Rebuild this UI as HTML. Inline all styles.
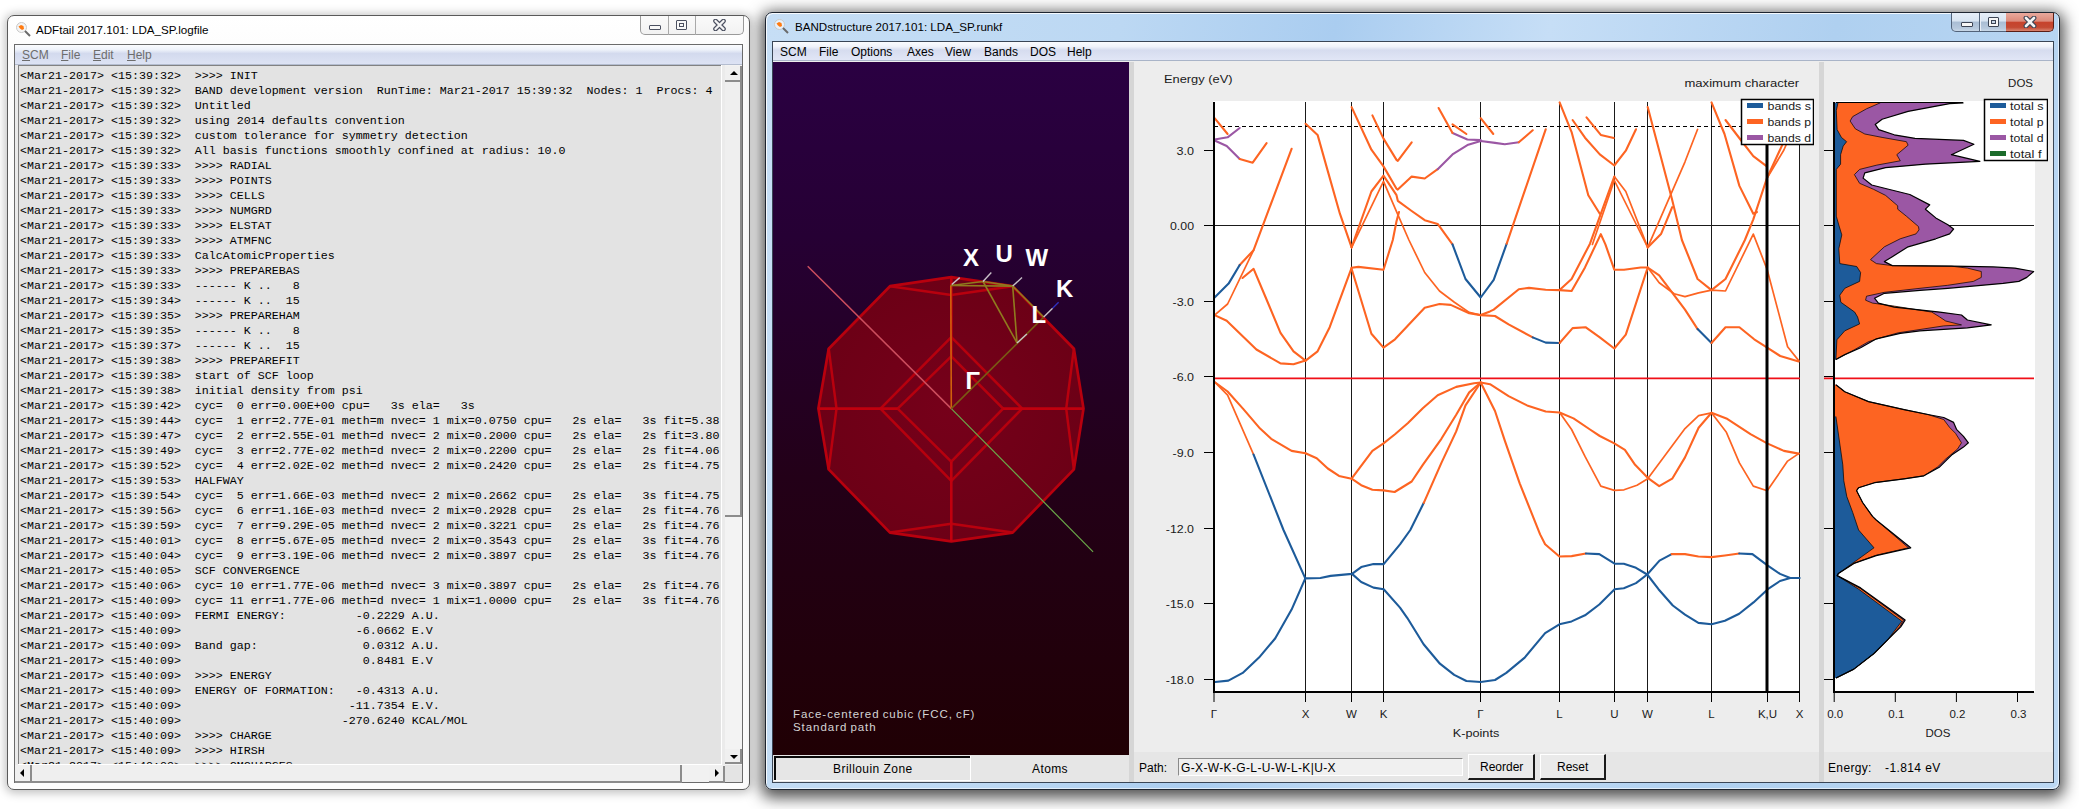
<!DOCTYPE html>
<html><head><meta charset="utf-8">
<style>
html,body{margin:0;padding:0;}
body{width:2079px;height:809px;overflow:hidden;position:relative;background:#ffffff;font-family:"Liberation Sans",sans-serif;}
.abs{position:absolute;}
pre{margin:0;font-family:"Liberation Mono",monospace;}
#win1{left:7px;top:15px;width:741px;height:773px;border:1px solid #5a5a5a;border-radius:7px;
 background:linear-gradient(#ffffff,#fcfcfc 40px,#fdfdfd);box-shadow:0 1px 10px 2px rgba(0,0,0,0.25);}
#win2{left:765px;top:12px;width:1293px;height:776px;border:1px solid #1e2530;border-radius:7px;
 background:linear-gradient(100deg,#c6def5 0%,#bcd8f3 25%,#aacdf0 40%,#c6def6 55%,#afd0f0 75%,#bcd8f3 100%);box-shadow:0 4px 15px 4px rgba(0,0,0,0.68), inset 1px 1px 0 rgba(255,255,255,0.85), inset -1px -1px 0 rgba(255,255,255,0.6);}
.title{font-size:12px;color:#000;white-space:nowrap;}
.menu{font-size:12px;white-space:nowrap;}
#logtext{left:19px;top:66px;width:702px;height:698px;overflow:hidden;background:#e3e3e3;}
#logtext pre{font-size:11.667px;line-height:15px;color:#000;padding:3px 0 0 1px;}
</style></head><body>

<!-- left window -->
<div class="abs" id="win1"></div>
<div class="abs title" style="left:36px;top:23px;font-size:11.6px;">ADFtail 2017.101: LDA_SP.logfile</div>
<svg class="abs" style="left:15px;top:21px;" width="18" height="18" viewBox="0 0 18 18">
 <circle cx="6.5" cy="6.5" r="5" fill="#f4f4f4" stroke="#c9c9c9" stroke-width="1"/>
 <path d="M3.5 5.5 L6 4 L8.5 5 L9 8 L7 9 L5 7.5 Z" fill="#ff7a10"/>
 <line x1="10" y1="10" x2="15" y2="15" stroke="#6a6a6a" stroke-width="2"/>
</svg>
<!-- title buttons left -->
<div class="abs" style="left:640px;top:16px;width:102px;height:18px;border:1px solid #9a9a9a;border-top:none;border-radius:0 0 5px 5px;background:linear-gradient(#fafafa,#f2f2f2);"></div>
<div class="abs" style="left:668px;top:16px;width:1px;height:19px;background:#a9a9a9;"></div>
<div class="abs" style="left:695px;top:16px;width:1px;height:19px;background:#a9a9a9;"></div>
<div class="abs" style="left:649px;top:25px;width:10px;height:3px;border:1px solid #4b5060;border-radius:1px;background:#f8f8f8;"></div>
<div class="abs" style="left:676px;top:20px;width:9px;height:8px;border:1px solid #4b5060;border-radius:1px;background:#f8f8f8;"></div>
<div class="abs" style="left:679px;top:23px;width:3px;height:2px;border:1px solid #4b5060;"></div>
<svg class="abs" style="left:713px;top:19px;" width="13" height="12" viewBox="0 0 13 12"><path d="M2.5 2 L10.5 10 M10.5 2 L2.5 10" stroke="#4b5060" stroke-width="4.6" stroke-linecap="round"/><path d="M2.5 2 L10.5 10 M10.5 2 L2.5 10" stroke="#f4f4f4" stroke-width="2.4" stroke-linecap="round"/></svg>
<!-- client area left -->
<div class="abs" style="left:14px;top:44px;width:727px;height:737px;border:1px solid #6b6b6b;background:#ebebeb;"></div>
<div class="abs" style="left:15px;top:45px;width:727px;height:19px;background:linear-gradient(#fbfcfe 0%,#eef2fa 25%,#d3daee 45%,#dde3f4 100%);border-bottom:1px solid #b4bdd0;"></div>
<div class="abs menu" style="left:22px;top:48px;color:#6d6d6d;"><u>S</u>CM</div>
<div class="abs menu" style="left:61px;top:48px;color:#6d6d6d;"><u>F</u>ile</div>
<div class="abs menu" style="left:93px;top:48px;color:#6d6d6d;"><u>E</u>dit</div>
<div class="abs menu" style="left:127px;top:48px;color:#6d6d6d;"><u>H</u>elp</div>
<div class="abs" style="left:18px;top:65px;width:1px;height:699px;background:#828282;"></div><div class="abs" style="left:18px;top:65px;width:703px;height:1px;background:#828282;"></div>
<div class="abs" style="left:721px;top:65px;width:1px;height:700px;background:#ffffff;"></div>
<div class="abs" style="left:18px;top:764px;width:704px;height:1px;background:#ffffff;"></div>
<!-- vscroll -->
<div class="abs" style="left:725px;top:65px;width:17px;height:700px;background:#f3f3f3;"></div>
<div class="abs" style="left:725px;top:66px;width:15px;height:14px;background:#f0f0f0;border-right:2px solid #8c8c8c;border-bottom:2px solid #8c8c8c;"></div>
<div class="abs" style="left:730px;top:71px;width:0;height:0;border-left:4px solid transparent;border-right:4px solid transparent;border-bottom:4px solid #000;"></div>
<div class="abs" style="left:725px;top:82px;width:15px;height:433px;background:#efefef;border-right:2px solid #8c8c8c;border-bottom:2px solid #8c8c8c;"></div>
<div class="abs" style="left:725px;top:749px;width:15px;height:13px;background:#f0f0f0;border-right:2px solid #8c8c8c;border-bottom:2px solid #8c8c8c;"></div>
<div class="abs" style="left:730px;top:755px;width:0;height:0;border-left:4px solid transparent;border-right:4px solid transparent;border-top:4px solid #000;"></div>
<!-- hscroll -->
<div class="abs" style="left:15px;top:765px;width:710px;height:17px;background:#f1f1f1;"></div>
<div class="abs" style="left:15px;top:765px;width:15px;height:16px;background:#f0f0f0;border-right:2px solid #8c8c8c;border-bottom:2px solid #8c8c8c;"></div>
<div class="abs" style="left:20px;top:769px;width:0;height:0;border-top:4px solid transparent;border-bottom:4px solid transparent;border-right:4px solid #000;"></div>
<div class="abs" style="left:32px;top:765px;width:648px;height:16px;background:#efefef;border-right:2px solid #8c8c8c;border-bottom:2px solid #8c8c8c;"></div>
<div class="abs" style="left:709px;top:766px;width:14px;height:15px;background:#f0f0f0;border-right:2px solid #8c8c8c;border-bottom:2px solid #8c8c8c;"></div>
<div class="abs" style="left:715px;top:769px;width:0;height:0;border-top:4px solid transparent;border-bottom:4px solid transparent;border-left:4px solid #000;"></div>
<div class="abs" style="left:725px;top:765px;width:17px;height:17px;background:#e4e4e4;"></div>

<!-- right window -->
<div class="abs" id="win2"></div>
<div class="abs title" style="left:795px;top:20px;font-size:11.6px;">BANDstructure 2017.101: LDA_SP.runkf</div>
<svg class="abs" style="left:773px;top:18px;" width="18" height="18" viewBox="0 0 18 18">
 <circle cx="6.5" cy="6.5" r="5" fill="#e6f0fa" stroke="#c9c9c9" stroke-width="1"/>
 <path d="M3.5 5.5 L6 4 L8.5 5 L9 8 L7 9 L5 7.5 Z" fill="#ff7a10"/>
 <line x1="10" y1="10" x2="15" y2="15" stroke="#6a6a6a" stroke-width="2"/>
</svg>
<!-- title buttons right -->
<div class="abs" style="left:1951px;top:13px;width:55px;height:18px;border:1px solid #52637a;border-top:none;border-radius:0 0 0 5px;background:linear-gradient(#e6eef8 0%,#d8e4f1 45%,#a9bdd4 50%,#b7c9dd 85%,#c9d8e8 100%);"></div>
<div class="abs" style="left:1979px;top:13px;width:1px;height:18px;background:#52637a;"></div>
<div class="abs" style="left:1980px;top:13px;width:1px;height:18px;background:#e8eef6;"></div>
<div class="abs" style="left:2006px;top:13px;width:47px;height:18px;border:1px solid #5a1d15;border-top:none;border-left:none;border-radius:0 0 5px 0;background:linear-gradient(#e9a99d 0%,#dc8b7b 45%,#c7432c 52%,#c44a33 80%,#d98570 100%);"></div>
<div class="abs" style="left:1961px;top:22px;width:10px;height:3px;border:1px solid #3c4454;border-radius:1px;background:#f6f6f6;"></div>
<div class="abs" style="left:1988px;top:17px;width:9px;height:8px;border:1px solid #3c4454;border-radius:1px;background:#f6f6f6;"></div>
<div class="abs" style="left:1991px;top:20px;width:3px;height:2px;border:1px solid #3c4454;background:#c8d6e6;"></div>
<svg class="abs" style="left:2023px;top:16px;" width="14" height="12" viewBox="0 0 14 12"><path d="M3 2 L11 10 M11 2 L3 10" stroke="#3c4454" stroke-width="4.8" stroke-linecap="round"/><path d="M3 2 L11 10 M11 2 L3 10" stroke="#f4f4f4" stroke-width="2.6" stroke-linecap="round"/></svg>

<div class="abs" style="left:772px;top:41px;width:1280px;height:740px;border:1px solid #3a4656;background:#ededed;"></div>
<div class="abs" style="left:773px;top:42px;width:1280px;height:18px;background:linear-gradient(#fbfcfe 0%,#f0f3fa 25%,#d6dcef 45%,#e1e6f6 100%);border-bottom:1px solid #a9b4c8;"></div>
<div class="abs menu" style="left:780px;top:45px;">SCM</div>
<div class="abs menu" style="left:819px;top:45px;">File</div>
<div class="abs menu" style="left:851px;top:45px;">Options</div>
<div class="abs menu" style="left:907px;top:45px;">Axes</div>
<div class="abs menu" style="left:945px;top:45px;">View</div>
<div class="abs menu" style="left:984px;top:45px;">Bands</div>
<div class="abs menu" style="left:1030px;top:45px;">DOS</div>
<div class="abs menu" style="left:1067px;top:45px;">Help</div>
<div class="abs" style="left:773px;top:62px;width:356px;height:693px;background:linear-gradient(#2a0042,#260034 25%,#230018 60%,#200004);"></div>
<div class="abs" style="left:1129px;top:62px;width:5px;height:720px;background:#d6d6d6;"></div>
<div class="abs" style="left:1819px;top:62px;width:5px;height:720px;background:#d6d6d6;"></div>
<div class="abs" style="left:1134px;top:752px;width:685px;height:30px;background:#e6e6e6;"></div>
<div class="abs" style="left:1824px;top:752px;width:229px;height:30px;background:#e6e6e6;"></div>
<div class="abs" style="left:773px;top:755px;width:356px;height:27px;background:#e6e6e6;"></div>
<!-- tabs -->
<div class="abs" style="left:774px;top:756px;width:195px;height:23px;background:#e6e6e6;border-left:2px solid #0a0a0a;border-top:2px solid #0a0a0a;"></div>
<div class="abs" style="left:774px;top:756px;width:197px;height:25px;box-shadow:inset -1px -1px 0 #ffffff;"></div>
<div class="abs menu" style="left:833px;top:762px;font-size:12px;letter-spacing:0.45px;">Brillouin Zone</div>
<div class="abs menu" style="left:1032px;top:762px;font-size:12px;letter-spacing:0.4px;">Atoms</div>
<div class="abs" style="left:793px;top:708px;color:#d4d4d4;font-size:11.5px;line-height:13px;letter-spacing:0.95px;word-spacing:-1px;">Face-centered cubic (FCC, cF)<br>Standard path</div>
<!-- bottom path controls -->
<div class="abs menu" style="left:1139px;top:761px;">Path:</div>
<div class="abs" style="left:1178px;top:758px;width:283px;height:16px;background:#f0f0f0;border:1px solid #ffffff;border-left-color:#8a8a8a;border-top-color:#8a8a8a;"></div>
<div class="abs menu" style="left:1181px;top:761px;letter-spacing:0.36px;">G-X-W-K-G-L-U-W-L-K|U-X</div>
<div class="abs" style="left:1468px;top:754px;width:64px;height:23px;background:#eaeaea;border:1px solid #ffffff;border-right:2px solid #1a1a1a;border-bottom:2px solid #1a1a1a;"></div>
<div class="abs menu" style="left:1480px;top:760px;">Reorder</div>
<div class="abs" style="left:1540px;top:754px;width:63px;height:23px;background:#eaeaea;border:1px solid #ffffff;border-right:2px solid #1a1a1a;border-bottom:2px solid #1a1a1a;"></div>
<div class="abs menu" style="left:1557px;top:760px;">Reset</div>
<div class="abs menu" style="left:1828px;top:761px;letter-spacing:0.35px;">Energy:</div>
<div class="abs menu" style="left:1885px;top:761px;letter-spacing:0.4px;">-1.814 eV</div>

<div class="abs" id="logtext"><pre>&lt;Mar21-2017&gt; &lt;15:39:32&gt;  &gt;&gt;&gt;&gt; INIT
&lt;Mar21-2017&gt; &lt;15:39:32&gt;  BAND development version  RunTime: Mar21-2017 15:39:32  Nodes: 1  Procs: 4
&lt;Mar21-2017&gt; &lt;15:39:32&gt;  Untitled
&lt;Mar21-2017&gt; &lt;15:39:32&gt;  using 2014 defaults convention
&lt;Mar21-2017&gt; &lt;15:39:32&gt;  custom tolerance for symmetry detection
&lt;Mar21-2017&gt; &lt;15:39:32&gt;  All basis functions smoothly confined at radius: 10.0
&lt;Mar21-2017&gt; &lt;15:39:33&gt;  &gt;&gt;&gt;&gt; RADIAL
&lt;Mar21-2017&gt; &lt;15:39:33&gt;  &gt;&gt;&gt;&gt; POINTS
&lt;Mar21-2017&gt; &lt;15:39:33&gt;  &gt;&gt;&gt;&gt; CELLS
&lt;Mar21-2017&gt; &lt;15:39:33&gt;  &gt;&gt;&gt;&gt; NUMGRD
&lt;Mar21-2017&gt; &lt;15:39:33&gt;  &gt;&gt;&gt;&gt; ELSTAT
&lt;Mar21-2017&gt; &lt;15:39:33&gt;  &gt;&gt;&gt;&gt; ATMFNC
&lt;Mar21-2017&gt; &lt;15:39:33&gt;  CalcAtomicProperties
&lt;Mar21-2017&gt; &lt;15:39:33&gt;  &gt;&gt;&gt;&gt; PREPAREBAS
&lt;Mar21-2017&gt; &lt;15:39:33&gt;  ------ K ..   8
&lt;Mar21-2017&gt; &lt;15:39:34&gt;  ------ K ..  15
&lt;Mar21-2017&gt; &lt;15:39:35&gt;  &gt;&gt;&gt;&gt; PREPAREHAM
&lt;Mar21-2017&gt; &lt;15:39:35&gt;  ------ K ..   8
&lt;Mar21-2017&gt; &lt;15:39:37&gt;  ------ K ..  15
&lt;Mar21-2017&gt; &lt;15:39:38&gt;  &gt;&gt;&gt;&gt; PREPAREFIT
&lt;Mar21-2017&gt; &lt;15:39:38&gt;  start of SCF loop
&lt;Mar21-2017&gt; &lt;15:39:38&gt;  initial density from psi
&lt;Mar21-2017&gt; &lt;15:39:42&gt;  cyc=  0 err=0.00E+00 cpu=   3s ela=   3s
&lt;Mar21-2017&gt; &lt;15:39:44&gt;  cyc=  1 err=2.77E-01 meth=m nvec= 1 mix=0.0750 cpu=   2s ela=   3s fit=5.38
&lt;Mar21-2017&gt; &lt;15:39:47&gt;  cyc=  2 err=2.55E-01 meth=d nvec= 2 mix=0.2000 cpu=   2s ela=   2s fit=3.80
&lt;Mar21-2017&gt; &lt;15:39:49&gt;  cyc=  3 err=2.77E-02 meth=d nvec= 2 mix=0.2200 cpu=   2s ela=   2s fit=4.06
&lt;Mar21-2017&gt; &lt;15:39:52&gt;  cyc=  4 err=2.02E-02 meth=d nvec= 2 mix=0.2420 cpu=   2s ela=   2s fit=4.75
&lt;Mar21-2017&gt; &lt;15:39:53&gt;  HALFWAY
&lt;Mar21-2017&gt; &lt;15:39:54&gt;  cyc=  5 err=1.66E-03 meth=d nvec= 2 mix=0.2662 cpu=   2s ela=   3s fit=4.75
&lt;Mar21-2017&gt; &lt;15:39:56&gt;  cyc=  6 err=1.16E-03 meth=d nvec= 2 mix=0.2928 cpu=   2s ela=   2s fit=4.76
&lt;Mar21-2017&gt; &lt;15:39:59&gt;  cyc=  7 err=9.29E-05 meth=d nvec= 2 mix=0.3221 cpu=   2s ela=   2s fit=4.76
&lt;Mar21-2017&gt; &lt;15:40:01&gt;  cyc=  8 err=5.67E-05 meth=d nvec= 2 mix=0.3543 cpu=   2s ela=   3s fit=4.76
&lt;Mar21-2017&gt; &lt;15:40:04&gt;  cyc=  9 err=3.19E-06 meth=d nvec= 2 mix=0.3897 cpu=   2s ela=   3s fit=4.76
&lt;Mar21-2017&gt; &lt;15:40:05&gt;  SCF CONVERGENCE
&lt;Mar21-2017&gt; &lt;15:40:06&gt;  cyc= 10 err=1.77E-06 meth=d nvec= 3 mix=0.3897 cpu=   2s ela=   2s fit=4.76
&lt;Mar21-2017&gt; &lt;15:40:09&gt;  cyc= 11 err=1.77E-06 meth=d nvec= 1 mix=1.0000 cpu=   2s ela=   3s fit=4.76
&lt;Mar21-2017&gt; &lt;15:40:09&gt;  FERMI ENERGY:          -0.2229 A.U.
&lt;Mar21-2017&gt; &lt;15:40:09&gt;                         -6.0662 E.V
&lt;Mar21-2017&gt; &lt;15:40:09&gt;  Band gap:               0.0312 A.U.
&lt;Mar21-2017&gt; &lt;15:40:09&gt;                          0.8481 E.V
&lt;Mar21-2017&gt; &lt;15:40:09&gt;  &gt;&gt;&gt;&gt; ENERGY
&lt;Mar21-2017&gt; &lt;15:40:09&gt;  ENERGY OF FORMATION:   -0.4313 A.U.
&lt;Mar21-2017&gt; &lt;15:40:09&gt;                        -11.7354 E.V.
&lt;Mar21-2017&gt; &lt;15:40:09&gt;                       -270.6240 KCAL/MOL
&lt;Mar21-2017&gt; &lt;15:40:09&gt;  &gt;&gt;&gt;&gt; CHARGE
&lt;Mar21-2017&gt; &lt;15:40:09&gt;  &gt;&gt;&gt;&gt; HIRSH
&lt;Mar21-2017&gt; &lt;15:40:09&gt;  &gt;&gt;&gt;&gt; CMCHARGES</pre></div>
<svg class="abs" style="left:0;top:0;" width="2079" height="809" viewBox="0 0 2079 809">
<rect x="1213" y="101" width="587" height="591" fill="#ffffff"/>
<line x1="1305.5" y1="102" x2="1305.5" y2="691" stroke="#1a1a1a" stroke-width="1"/>
<line x1="1351.5" y1="102" x2="1351.5" y2="691" stroke="#1a1a1a" stroke-width="1"/>
<line x1="1383.5" y1="102" x2="1383.5" y2="691" stroke="#1a1a1a" stroke-width="1"/>
<line x1="1480.5" y1="102" x2="1480.5" y2="691" stroke="#1a1a1a" stroke-width="1"/>
<line x1="1559.5" y1="102" x2="1559.5" y2="691" stroke="#1a1a1a" stroke-width="1"/>
<line x1="1614.5" y1="102" x2="1614.5" y2="691" stroke="#1a1a1a" stroke-width="1"/>
<line x1="1647.5" y1="102" x2="1647.5" y2="691" stroke="#1a1a1a" stroke-width="1"/>
<line x1="1711.5" y1="102" x2="1711.5" y2="691" stroke="#1a1a1a" stroke-width="1"/>
<line x1="1799.5" y1="102" x2="1799.5" y2="691" stroke="#1a1a1a" stroke-width="1"/>
<line x1="1214" y1="225.5" x2="1800" y2="225.5" stroke="#1a1a1a" stroke-width="1"/>
<line x1="1214" y1="126.5" x2="1800" y2="126.5" stroke="#000" stroke-width="1" stroke-dasharray="4,3"/>
<line x1="1214" y1="378.4" x2="1800" y2="378.4" stroke="#f01018" stroke-width="1.6"/>
<g fill="none" stroke-linejoin="round" stroke-linecap="round">
<polyline points="1214.6,118.2 1227.6,134.0" stroke="#fd6422" stroke-width="2.1"/>
<polyline points="1214.6,139.5 1227.6,137.3 1239.7,128.0" stroke="#9b57a4" stroke-width="2.1"/>
<polyline points="1214.6,140.5 1226.7,146.0 1239.7,159.0" stroke="#9b57a4" stroke-width="2.1"/>
<polyline points="1239.7,159.0 1252.7,162.7 1266.6,143.2" stroke="#fd6422" stroke-width="2.1"/>
<polyline points="1239.7,265.0 1253.6,250.2 1291.6,148.8" stroke="#fd6422" stroke-width="2.1"/>
<polyline points="1214.6,297.5 1228.6,283.6 1239.7,265.0" stroke="#1d5b9a" stroke-width="2.1"/>
<polyline points="1214.6,315.1 1227.6,304.0 1253.6,250.2" stroke="#fd6422" stroke-width="1.7"/>
<polyline points="1242.5,278.0 1253.6,268.8 1265.7,297.5 1280.5,332.8 1293.5,351.3 1305.5,360.6" stroke="#fd6422" stroke-width="2.1"/>
<polyline points="1214.6,315.1 1226.7,320.7 1256.4,349.5 1280.5,363.4 1293.5,364.3 1305.5,360.6" stroke="#fd6422" stroke-width="2.1"/>
<polyline points="1214.6,382.0 1227.6,391.5 1243.4,409.1 1260.1,428.6 1271.2,438.8 1291.6,450.9 1305.5,453.3" stroke="#fd6422" stroke-width="2.1"/>
<polyline points="1214.6,382.0 1227.6,395.2 1253.6,454.6" stroke="#fd6422" stroke-width="1.7"/>
<polyline points="1253.6,454.6 1283.5,530.0 1305.3,578.4" stroke="#1d5b9a" stroke-width="2.1"/>
<polyline points="1215.1,682.0 1228.4,680.6 1242.7,672.9 1259.0,657.6 1275.3,638.2 1291.6,609.6 1305.3,578.4" stroke="#1d5b9a" stroke-width="2.1"/>
<polyline points="1305.6,123.8 1317.6,134.9 1327.8,171.1 1339.9,213.7 1351.6,247.4" stroke="#fd6422" stroke-width="2.1"/>
<polyline points="1351.6,107.1 1371.4,149.7 1383.5,166.4 1396.5,188.7 1397.8,189.6 1411.7,176.6 1424.7,178.5 1437.7,169.2" stroke="#fd6422" stroke-width="2.1"/>
<polyline points="1437.7,169.2 1452.5,154.4 1467.4,145.1 1480.7,141.0 1495.0,142.9 1504.8,144.2 1518.8,142.3" stroke="#9b57a4" stroke-width="2.1"/>
<polyline points="1518.8,142.3 1532.7,130.3" stroke="#fd6422" stroke-width="2.1"/>
<polyline points="1372.4,115.4 1383.5,138.6 1396.5,159.9 1397.8,160.9 1411.7,142.3" stroke="#fd6422" stroke-width="2.1"/>
<polyline points="1351.6,247.4 1371.4,191.5 1383.5,175.7 1396.5,195.2 1397.8,200.8 1411.7,211.0 1424.7,220.2 1437.7,223.9 1452.5,244.4" stroke="#fd6422" stroke-width="2.1"/>
<polyline points="1452.5,244.4 1465.5,279.0 1480.7,297.5 1493.7,279.9 1506.7,243.7" stroke="#1d5b9a" stroke-width="2.1"/>
<polyline points="1506.7,243.7 1545.7,129.3" stroke="#fd6422" stroke-width="2.1"/>
<polyline points="1351.6,247.4 1383.5,181.3 1395.0,208.2 1408.9,240.0 1424.7,272.5 1439.5,291.0 1454.4,302.2 1469.2,312.4 1480.7,315.1" stroke="#fd6422" stroke-width="1.7"/>
<polyline points="1351.6,267.8 1358.4,266.9 1383.5,269.7 1392.8,240.0 1396.5,221.2 1399.0,212.0" stroke="#fd6422" stroke-width="2.1"/>
<polyline points="1305.6,360.6 1317.6,351.3 1329.7,327.2 1351.6,267.8" stroke="#fd6422" stroke-width="2.1"/>
<polyline points="1351.6,268.8 1371.4,333.7 1383.5,347.6 1395.0,339.3 1424.7,307.7 1439.5,304.0 1450.7,304.9 1469.2,313.3 1480.7,315.1" stroke="#fd6422" stroke-width="2.1"/>
<polyline points="1305.5,453.3 1316.7,458.3 1327.8,468.5 1339.0,475.9 1351.6,478.7 1361.2,485.2 1372.4,489.8 1383.5,490.4 1394.6,492.0 1411.7,481.5 1422.8,464.8 1441.4,438.8 1456.2,414.7 1469.2,392.4 1480.7,382.5" stroke="#fd6422" stroke-width="2.1"/>
<polyline points="1351.6,478.7 1372.4,450.9 1383.5,443.4 1395.0,434.2 1408.0,423.0 1422.8,408.2 1437.7,395.2 1456.2,386.9 1474.0,383.2 1480.7,382.5" stroke="#fd6422" stroke-width="2.1"/>
<polyline points="1305.1,578.4 1320.4,578.0 1330.6,575.9 1352.0,573.9 1361.2,567.1 1373.5,564.1 1383.7,564.1 1400.0,544.3 1410.3,530.0 1423.8,502.8" stroke="#1d5b9a" stroke-width="2.1"/>
<polyline points="1423.8,502.8 1441.4,462.9 1456.2,431.4 1465.5,405.4 1480.7,382.5" stroke="#fd6422" stroke-width="2.1"/>
<polyline points="1352.0,573.9 1361.2,582.0 1373.5,587.6 1383.7,589.2 1400.0,607.6 1407.2,617.8 1423.6,644.3 1439.9,663.7 1454.2,674.9 1466.4,681.0 1480.7,682.0 1495.0,680.0 1506.3,672.9 1524.7,657.6 1545.1,633.1 1559.4,624.3 1571.6,621.4 1585.0,615.3 1599.3,604.5 1614.6,589.2 1623.8,588.2 1636.0,583.1 1647.2,574.5 1659.5,560.6 1671.7,554.1" stroke="#1d5b9a" stroke-width="2.1"/>
<polyline points="1480.7,140.1 1467.4,139.5 1452.5,133.0" stroke="#9b57a4" stroke-width="2.1"/>
<polyline points="1452.5,133.0 1438.6,108.0" stroke="#fd6422" stroke-width="2.1"/>
<polyline points="1452.5,124.3 1466.4,134.0" stroke="#fd6422" stroke-width="2.1"/>
<polyline points="1480.7,118.2 1493.3,134.0" stroke="#fd6422" stroke-width="2.1"/>
<polyline points="1559.6,102.4 1571.6,132.1 1588.3,195.2 1599.8,213.7" stroke="#fd6422" stroke-width="2.1"/>
<polyline points="1572.6,120.0 1585.0,137.7 1599.8,154.4 1614.3,165.5 1625.8,150.7 1636.0,129.3" stroke="#fd6422" stroke-width="2.1"/>
<polyline points="1586.5,117.3 1600.8,134.9 1613.8,138.0" stroke="#fd6422" stroke-width="2.1"/>
<polyline points="1480.7,315.1 1490.0,311.4 1493.7,309.6 1518.8,289.2 1529.0,287.9 1545.7,289.7 1559.6,290.1 1571.6,279.0 1590.0,243.7 1614.3,176.6" stroke="#fd6422" stroke-width="2.1"/>
<polyline points="1559.6,290.1 1571.6,291.0 1585.0,267.4 1600.8,234.1 1605.4,244.4 1614.3,269.7 1624.0,269.7 1640.7,267.5 1647.7,267.5" stroke="#fd6422" stroke-width="2.1"/>
<polyline points="1592.4,244.4 1614.3,180.3" stroke="#fd6422" stroke-width="1.7"/>
<polyline points="1480.7,315.1 1495.0,316.0 1508.6,324.4 1532.7,337.4" stroke="#fd6422" stroke-width="2.1"/>
<polyline points="1532.7,337.4 1545.7,342.6 1559.6,343.0" stroke="#1d5b9a" stroke-width="2.1"/>
<polyline points="1559.6,343.0 1572.6,328.1 1585.5,327.2 1599.8,337.4 1614.3,348.5 1625.8,334.6 1647.7,267.5" stroke="#fd6422" stroke-width="2.1"/>
<polyline points="1480.7,382.5 1490.0,384.2 1508.6,396.1 1527.1,405.4 1545.7,411.5 1559.6,412.5 1573.5,418.4 1590.0,429.5 1599.8,436.0 1614.3,443.4 1624.9,449.9 1635.1,464.8 1647.7,477.8 1659.2,486.1 1672.2,478.7 1685.0,457.4 1698.6,427.7 1711.5,412.8" stroke="#fd6422" stroke-width="2.1"/>
<polyline points="1480.7,382.5 1495.0,411.0 1504.8,440.7 1519.7,483.3 1540.1,534.4 1545.1,544.3 1559.4,556.5 1571.6,556.1 1585.9,553.5" stroke="#fd6422" stroke-width="2.1"/>
<polyline points="1585.9,553.5 1599.3,554.1 1614.6,563.7 1623.8,563.7 1636.0,567.8 1647.2,574.5 1658.5,589.2 1672.8,605.5 1685.0,614.7 1698.4,622.9 1711.6,624.3 1724.9,620.8 1739.2,613.7 1753.5,602.4 1767.8,589.2 1780.0,581.0 1790.2,578.0 1799.4,578.0" stroke="#1d5b9a" stroke-width="2.1"/>
<polyline points="1559.6,412.5 1571.6,429.5 1585.0,456.4 1600.8,486.1 1614.3,490.4 1624.0,489.8 1637.0,485.2 1647.7,478.7 1685.0,428.6 1698.6,415.6 1711.5,412.8" stroke="#fd6422" stroke-width="1.7"/>
<polyline points="1711.5,412.8 1726.4,418.4 1750.5,434.2 1767.2,443.4 1783.9,450.9 1798.7,453.6" stroke="#fd6422" stroke-width="2.1"/>
<polyline points="1711.5,412.8 1726.4,432.3 1739.4,462.9 1753.3,486.1 1767.2,490.8 1787.6,461.1 1798.7,453.6" stroke="#fd6422" stroke-width="1.7"/>
<polyline points="1671.7,554.1 1685.0,554.1 1698.4,556.5 1711.6,557.1 1724.9,555.5 1739.2,553.5" stroke="#fd6422" stroke-width="2.1"/>
<polyline points="1739.2,553.5 1752.4,554.1 1767.8,565.7 1780.0,573.9 1790.2,578.0 1799.4,578.0" stroke="#1d5b9a" stroke-width="2.1"/>
<polyline points="1647.7,107.1 1672.2,200.0 1681.9,240.0 1697.6,279.0 1711.5,290.1 1725.5,279.0 1744.9,240.0 1753.3,219.3 1766.8,178.5 1783.9,141.4 1795.0,118.0" stroke="#fd6422" stroke-width="2.1"/>
<polyline points="1647.7,247.4 1685.0,161.8 1697.6,129.3" stroke="#fd6422" stroke-width="1.7"/>
<polyline points="1614.3,176.6 1625.8,191.5 1647.7,247.4" stroke="#fd6422" stroke-width="1.7"/>
<polyline points="1614.3,180.3 1647.7,247.4" stroke="#fd6422" stroke-width="1.6"/>
<polyline points="1647.7,247.4 1661.0,234.1 1672.2,207.2" stroke="#fd6422" stroke-width="2.1"/>
<polyline points="1647.7,267.5 1659.2,282.7 1674.1,293.8 1685.0,296.6 1698.6,292.9 1711.5,290.1 1725.5,291.0 1753.3,234.1 1767.2,269.7 1787.6,346.7 1798.7,360.6" stroke="#fd6422" stroke-width="1.7"/>
<polyline points="1647.7,267.5 1659.2,275.3 1685.0,309.6 1697.6,329.1" stroke="#fd6422" stroke-width="2.1"/>
<polyline points="1697.6,329.1 1711.5,343.0" stroke="#1d5b9a" stroke-width="2.1"/>
<polyline points="1711.5,343.0 1725.5,327.2 1739.4,327.2 1754.2,339.3 1767.2,347.6 1780.2,356.0 1798.7,361.5" stroke="#fd6422" stroke-width="2.1"/>
<polyline points="1711.5,102.4 1724.5,134.0 1739.4,185.9 1753.3,213.7 1757.0,212.0" stroke="#fd6422" stroke-width="2.1"/>
<polyline points="1725.5,120.0 1741.2,140.5 1753.3,156.2 1766.8,166.4" stroke="#fd6422" stroke-width="2.1"/>
<polyline points="1766.8,178.5 1783.9,150.0 1796.0,122.0" stroke="#fd6422" stroke-width="1.7"/>
</g>
<rect x="1765.5" y="102" width="3" height="589" fill="#000"/>
<rect x="1213" y="102" width="2" height="591" fill="#000"/>
<rect x="1213" y="691" width="587" height="2" fill="#000"/>
<line x1="1204" y1="150.5" x2="1213" y2="150.5" stroke="#000" stroke-width="1"/>
<text x="1194" y="154.7" text-anchor="end" font-size="11.5" fill="#1a1a1a" textLength="17.5" lengthAdjust="spacingAndGlyphs">3.0</text>
<line x1="1204" y1="225.5" x2="1213" y2="225.5" stroke="#000" stroke-width="1"/>
<text x="1194" y="229.7" text-anchor="end" font-size="11.5" fill="#1a1a1a" textLength="24.0" lengthAdjust="spacingAndGlyphs">0.00</text>
<line x1="1204" y1="301.5" x2="1213" y2="301.5" stroke="#000" stroke-width="1"/>
<text x="1194" y="305.7" text-anchor="end" font-size="11.5" fill="#1a1a1a" textLength="21.5" lengthAdjust="spacingAndGlyphs">-3.0</text>
<line x1="1204" y1="376.5" x2="1213" y2="376.5" stroke="#000" stroke-width="1"/>
<text x="1194" y="380.7" text-anchor="end" font-size="11.5" fill="#1a1a1a" textLength="21.5" lengthAdjust="spacingAndGlyphs">-6.0</text>
<line x1="1204" y1="452.5" x2="1213" y2="452.5" stroke="#000" stroke-width="1"/>
<text x="1194" y="456.7" text-anchor="end" font-size="11.5" fill="#1a1a1a" textLength="21.5" lengthAdjust="spacingAndGlyphs">-9.0</text>
<line x1="1204" y1="528.5" x2="1213" y2="528.5" stroke="#000" stroke-width="1"/>
<text x="1194" y="532.7" text-anchor="end" font-size="11.5" fill="#1a1a1a" textLength="28.2" lengthAdjust="spacingAndGlyphs">-12.0</text>
<line x1="1204" y1="603.5" x2="1213" y2="603.5" stroke="#000" stroke-width="1"/>
<text x="1194" y="607.7" text-anchor="end" font-size="11.5" fill="#1a1a1a" textLength="28.2" lengthAdjust="spacingAndGlyphs">-15.0</text>
<line x1="1204" y1="679.5" x2="1213" y2="679.5" stroke="#000" stroke-width="1"/>
<text x="1194" y="683.7" text-anchor="end" font-size="11.5" fill="#1a1a1a" textLength="28.2" lengthAdjust="spacingAndGlyphs">-18.0</text>
<line x1="1214.0" y1="693" x2="1214.0" y2="702" stroke="#000" stroke-width="1"/>
<text x="1214.0" y="717.5" text-anchor="middle" font-size="11.5" fill="#1a1a1a">Γ</text>
<line x1="1305.5" y1="693" x2="1305.5" y2="702" stroke="#000" stroke-width="1"/>
<text x="1305.5" y="717.5" text-anchor="middle" font-size="11.5" fill="#1a1a1a">X</text>
<line x1="1351.5" y1="693" x2="1351.5" y2="702" stroke="#000" stroke-width="1"/>
<text x="1351.5" y="717.5" text-anchor="middle" font-size="11.5" fill="#1a1a1a">W</text>
<line x1="1383.5" y1="693" x2="1383.5" y2="702" stroke="#000" stroke-width="1"/>
<text x="1383.5" y="717.5" text-anchor="middle" font-size="11.5" fill="#1a1a1a">K</text>
<line x1="1480.5" y1="693" x2="1480.5" y2="702" stroke="#000" stroke-width="1"/>
<text x="1480.5" y="717.5" text-anchor="middle" font-size="11.5" fill="#1a1a1a">Γ</text>
<line x1="1559.5" y1="693" x2="1559.5" y2="702" stroke="#000" stroke-width="1"/>
<text x="1559.5" y="717.5" text-anchor="middle" font-size="11.5" fill="#1a1a1a">L</text>
<line x1="1614.5" y1="693" x2="1614.5" y2="702" stroke="#000" stroke-width="1"/>
<text x="1614.5" y="717.5" text-anchor="middle" font-size="11.5" fill="#1a1a1a">U</text>
<line x1="1647.5" y1="693" x2="1647.5" y2="702" stroke="#000" stroke-width="1"/>
<text x="1647.5" y="717.5" text-anchor="middle" font-size="11.5" fill="#1a1a1a">W</text>
<line x1="1711.5" y1="693" x2="1711.5" y2="702" stroke="#000" stroke-width="1"/>
<text x="1711.5" y="717.5" text-anchor="middle" font-size="11.5" fill="#1a1a1a">L</text>
<line x1="1767.5" y1="693" x2="1767.5" y2="702" stroke="#000" stroke-width="1"/>
<text x="1767.5" y="717.5" text-anchor="middle" font-size="11.5" fill="#1a1a1a">K,U</text>
<line x1="1799.5" y1="693" x2="1799.5" y2="702" stroke="#000" stroke-width="1"/>
<text x="1799.5" y="717.5" text-anchor="middle" font-size="11.5" fill="#1a1a1a">X</text>
<text x="1476" y="737" text-anchor="middle" font-size="11.5" fill="#1a1a1a" textLength="46.5" lengthAdjust="spacingAndGlyphs">K-points</text>
<text x="1164" y="82.5" font-size="11.5" fill="#1a1a1a" textLength="68.5" lengthAdjust="spacingAndGlyphs">Energy (eV)</text>
<text x="1799" y="87" text-anchor="end" font-size="11.5" fill="#1a1a1a" textLength="114.5" lengthAdjust="spacingAndGlyphs">maximum character</text>
<rect x="1741.5" y="99.5" width="72" height="45" fill="#fff" stroke="#000" stroke-width="1.5"/>
<rect x="1747" y="103" width="16" height="5" fill="#1d5b9a"/>
<text x="1767.5" y="110.0" font-size="11.8" fill="#1a1a1a" textLength="43.5" lengthAdjust="spacingAndGlyphs">bands s</text>
<rect x="1747" y="119" width="16" height="5" fill="#fd6422"/>
<text x="1767.5" y="126.0" font-size="11.8" fill="#1a1a1a" textLength="43.5" lengthAdjust="spacingAndGlyphs">bands p</text>
<rect x="1747" y="135" width="16" height="5" fill="#9b57a4"/>
<text x="1767.5" y="142.0" font-size="11.8" fill="#1a1a1a" textLength="43.5" lengthAdjust="spacingAndGlyphs">bands d</text>
<rect x="1814" y="96" width="5" height="52" fill="#ededed"/>
</svg><svg class="abs" style="left:0;top:0;" width="2079" height="809" viewBox="0 0 2079 809">
<rect x="1834" y="101" width="201" height="591" fill="#ffffff"/>
<line x1="1824" y1="225.5" x2="2034" y2="225.5" stroke="#1a1a1a" stroke-width="1"/>
<line x1="1824" y1="378.4" x2="2034" y2="378.4" stroke="#f01018" stroke-width="1.6"/>
<polygon points="1835.0,102.8 1963.5,102.8 1949.6,103.7 1908.1,111.4 1882.1,119.2 1875.2,124.4 1878.7,129.6 1894.2,134.8 1915.0,138.3 1963.5,140.4 1973.9,144.3 1951.4,154.7 1979.9,161.3 1925.4,164.2 1885.6,167.7 1864.8,172.9 1863.1,178.1 1871.7,185.0 1885.6,188.5 1909.8,194.5 1929.7,204.9 1925.4,209.2 1935.8,217.9 1947.9,224.8 1953.6,229.0 1949.6,233.9 1935.8,238.8 1908.1,246.8 1892.3,256.7 1884.4,261.6 1892.3,265.6 1951.6,266.2 1993.2,266.9 2014.9,268.1 2033.7,271.5 2026.8,277.4 2018.9,281.4 2003.1,283.4 1947.7,288.3 1920.0,290.3 1884.4,293.3 1874.5,298.2 1878.4,303.1 1894.2,307.1 1939.8,312.1 1961.5,315.0 1967.4,320.0 1991.2,324.9 1967.4,327.9 1920.0,330.8 1900.2,333.4 1876.4,338.8 1860.6,347.7 1844.8,354.6 1835.9,359.5 1835.0,359.5" fill="#9b57a4"/>
<polygon points="1835.0,102.8 1880.4,102.8 1866.5,108.8 1852.7,116.6 1850.1,121.0 1855.3,128.8 1864.8,134.0 1882.1,137.4 1906.4,141.7 1908.1,145.2 1896.8,154.7 1900.3,160.8 1876.9,165.1 1859.6,169.4 1854.4,174.6 1859.6,183.3 1873.5,189.3 1885.6,195.4 1897.7,205.8 1897.7,209.2 1906.4,216.2 1918.5,226.6 1919.0,229.9 1916.0,233.9 1900.2,238.8 1884.4,246.8 1870.5,259.6 1876.4,263.6 1892.3,265.6 1951.6,266.2 1967.4,268.1 1981.3,271.5 1981.3,277.4 1973.4,281.4 1947.7,285.3 1920.0,288.3 1884.4,292.3 1866.5,296.2 1865.6,300.2 1872.5,303.1 1894.2,306.1 1931.8,312.1 1939.8,317.0 1945.7,321.0 1961.5,324.9 1943.7,325.9 1920.0,329.5 1898.2,332.8 1880.4,337.8 1868.5,341.7 1854.7,349.6 1835.9,359.5 1835.0,359.5" fill="#fd6422"/>
<polygon points="1835.0,102.8 1838.0,102.8 1836.3,110.6 1837.1,129.6 1841.4,137.4 1846.6,141.7 1843.2,146.1 1840.6,154.7 1840.6,164.2 1836.3,169.4 1836.3,216.2 1838.8,225.0 1841.8,234.9 1838.8,248.7 1839.8,263.6 1856.7,266.5 1860.6,272.5 1859.6,281.4 1844.8,288.3 1839.8,295.2 1840.8,302.2 1854.7,312.1 1857.6,317.0 1859.6,323.9 1844.8,330.8 1836.9,339.8 1835.9,359.5 1835.0,359.5" fill="#1d5b9a"/>
<polyline points="1963.5,102.8 1949.6,103.7 1908.1,111.4 1882.1,119.2 1875.2,124.4 1878.7,129.6 1894.2,134.8 1915.0,138.3 1963.5,140.4 1973.9,144.3 1951.4,154.7 1979.9,161.3 1925.4,164.2 1885.6,167.7 1864.8,172.9 1863.1,178.1 1871.7,185.0 1885.6,188.5 1909.8,194.5 1929.7,204.9 1925.4,209.2 1935.8,217.9 1947.9,224.8 1953.6,229.0 1949.6,233.9 1935.8,238.8 1908.1,246.8 1892.3,256.7 1884.4,261.6 1892.3,265.6 1951.6,266.2 1993.2,266.9 2014.9,268.1 2033.7,271.5 2026.8,277.4 2018.9,281.4 2003.1,283.4 1947.7,288.3 1920.0,290.3 1884.4,293.3 1874.5,298.2 1878.4,303.1 1894.2,307.1 1939.8,312.1 1961.5,315.0 1967.4,320.0 1991.2,324.9 1967.4,327.9 1920.0,330.8 1900.2,333.4 1876.4,338.8 1860.6,347.7 1844.8,354.6 1835.9,359.5" fill="none" stroke="#000" stroke-width="1.2" stroke-linejoin="round"/>
<polyline points="1880.4,102.8 1866.5,108.8 1852.7,116.6 1850.1,121.0 1855.3,128.8 1864.8,134.0 1882.1,137.4 1906.4,141.7 1908.1,145.2 1896.8,154.7 1900.3,160.8 1876.9,165.1 1859.6,169.4 1854.4,174.6 1859.6,183.3 1873.5,189.3 1885.6,195.4 1897.7,205.8 1897.7,209.2 1906.4,216.2 1918.5,226.6 1919.0,229.9 1916.0,233.9 1900.2,238.8 1884.4,246.8 1870.5,259.6 1876.4,263.6 1892.3,265.6 1951.6,266.2 1967.4,268.1 1981.3,271.5 1981.3,277.4 1973.4,281.4 1947.7,285.3 1920.0,288.3 1884.4,292.3 1866.5,296.2 1865.6,300.2 1872.5,303.1 1894.2,306.1 1931.8,312.1 1939.8,317.0 1945.7,321.0 1961.5,324.9 1943.7,325.9 1920.0,329.5 1898.2,332.8 1880.4,337.8 1868.5,341.7 1854.7,349.6 1835.9,359.5" fill="none" stroke="#000" stroke-width="0.7" stroke-linejoin="round"/>
<polyline points="1838.0,102.8 1836.3,110.6 1837.1,129.6 1841.4,137.4 1846.6,141.7 1843.2,146.1 1840.6,154.7 1840.6,164.2 1836.3,169.4 1836.3,216.2 1838.8,225.0 1841.8,234.9 1838.8,248.7 1839.8,263.6 1856.7,266.5 1860.6,272.5 1859.6,281.4 1844.8,288.3 1839.8,295.2 1840.8,302.2 1854.7,312.1 1857.6,317.0 1859.6,323.9 1844.8,330.8 1836.9,339.8 1835.9,359.5" fill="none" stroke="#000" stroke-width="0.7" stroke-linejoin="round"/>
<polygon points="1835.0,384.8 1835.9,384.8 1844.8,391.8 1868.5,401.6 1904.1,409.6 1927.9,414.5 1943.7,417.5 1953.6,422.4 1956.5,429.3 1963.5,436.3 1968.4,442.8 1963.5,447.1 1951.6,455.1 1939.7,466.9 1923.9,475.8 1904.1,478.8 1874.5,482.7 1858.6,487.7 1856.6,490.7 1862.6,502.5 1872.5,516.4 1876.2,520.0 1910.7,547.8 1876.2,555.6 1853.9,563.4 1838.4,573.4 1837.2,575.6 1860.6,587.9 1905.1,620.1 1900.7,626.8 1887.3,640.2 1874.0,653.5 1853.9,669.1 1836.1,678.0 1835.0,678.0" fill="#9b57a4"/>
<polygon points="1835.0,384.8 1835.9,384.8 1844.8,391.8 1868.5,401.6 1904.1,409.6 1927.9,414.5 1943.7,419.5 1949.6,427.4 1955.5,433.3 1961.5,442.8 1957.5,449.1 1945.7,459.0 1937.7,466.9 1923.9,475.8 1904.1,478.8 1874.5,482.7 1858.6,487.7 1856.6,490.7 1862.6,502.5 1872.5,516.4 1876.2,520.0 1908.5,547.8 1876.2,555.2 1853.9,563.4 1838.4,573.4 1837.2,575.6 1860.6,588.6 1903.5,620.1 1899.7,626.8 1887.3,640.2 1874.0,653.5 1853.9,669.1 1836.1,678.0 1835.0,678.0" fill="#fd6422"/>
<polygon points="1835.0,416.5 1835.9,416.5 1842.8,464.9 1843.8,480.8 1846.8,496.6 1852.7,512.4 1858.6,530.0 1874.0,547.8 1853.9,562.3 1838.4,573.4 1837.2,575.6 1858.4,589.0 1901.8,621.2 1887.3,640.2 1874.0,653.5 1853.9,669.1 1836.1,678.0 1835.0,678.0" fill="#1d5b9a"/>
<polyline points="1835.9,384.8 1844.8,391.8 1868.5,401.6 1904.1,409.6 1927.9,414.5 1943.7,417.5 1953.6,422.4 1956.5,429.3 1963.5,436.3 1968.4,442.8 1963.5,447.1 1951.6,455.1 1939.7,466.9 1923.9,475.8 1904.1,478.8 1874.5,482.7 1858.6,487.7 1856.6,490.7 1862.6,502.5 1872.5,516.4 1876.2,520.0 1910.7,547.8 1876.2,555.6 1853.9,563.4 1838.4,573.4 1837.2,575.6 1860.6,587.9 1905.1,620.1 1900.7,626.8 1887.3,640.2 1874.0,653.5 1853.9,669.1 1836.1,678.0" fill="none" stroke="#000" stroke-width="1.2" stroke-linejoin="round"/>
<polyline points="1835.9,384.8 1844.8,391.8 1868.5,401.6 1904.1,409.6 1927.9,414.5 1943.7,419.5 1949.6,427.4 1955.5,433.3 1961.5,442.8 1957.5,449.1 1945.7,459.0 1937.7,466.9 1923.9,475.8 1904.1,478.8 1874.5,482.7 1858.6,487.7 1856.6,490.7 1862.6,502.5 1872.5,516.4 1876.2,520.0 1908.5,547.8 1876.2,555.2 1853.9,563.4 1838.4,573.4 1837.2,575.6 1860.6,588.6 1903.5,620.1 1899.7,626.8 1887.3,640.2 1874.0,653.5 1853.9,669.1 1836.1,678.0" fill="none" stroke="#000" stroke-width="0.7" stroke-linejoin="round"/>
<polyline points="1835.9,416.5 1842.8,464.9 1843.8,480.8 1846.8,496.6 1852.7,512.4 1858.6,530.0 1874.0,547.8 1853.9,562.3 1838.4,573.4 1837.2,575.6 1858.4,589.0 1901.8,621.2 1887.3,640.2 1874.0,653.5 1853.9,669.1 1836.1,678.0" fill="none" stroke="#000" stroke-width="0.7" stroke-linejoin="round"/>
<line x1="1836" y1="102.5" x2="1963" y2="102.5" stroke="#000" stroke-width="1.2"/>
<rect x="1833" y="102" width="2" height="591" fill="#000"/>
<rect x="1833" y="691" width="201" height="2" fill="#000"/>
<line x1="1824" y1="150.5" x2="1833" y2="150.5" stroke="#000" stroke-width="1"/>
<line x1="1824" y1="225.5" x2="1833" y2="225.5" stroke="#000" stroke-width="1"/>
<line x1="1824" y1="301.5" x2="1833" y2="301.5" stroke="#000" stroke-width="1"/>
<line x1="1824" y1="376.5" x2="1833" y2="376.5" stroke="#000" stroke-width="1"/>
<line x1="1824" y1="452.5" x2="1833" y2="452.5" stroke="#000" stroke-width="1"/>
<line x1="1824" y1="528.5" x2="1833" y2="528.5" stroke="#000" stroke-width="1"/>
<line x1="1824" y1="603.5" x2="1833" y2="603.5" stroke="#000" stroke-width="1"/>
<line x1="1824" y1="679.5" x2="1833" y2="679.5" stroke="#000" stroke-width="1"/>
<line x1="1834.2" y1="693" x2="1834.2" y2="702" stroke="#000" stroke-width="1"/>
<text x="1835.2" y="717.5" text-anchor="middle" font-size="11.5" fill="#1a1a1a">0.0</text>
<line x1="1895.3" y1="693" x2="1895.3" y2="702" stroke="#000" stroke-width="1"/>
<text x="1896.3" y="717.5" text-anchor="middle" font-size="11.5" fill="#1a1a1a">0.1</text>
<line x1="1956.4" y1="693" x2="1956.4" y2="702" stroke="#000" stroke-width="1"/>
<text x="1957.4" y="717.5" text-anchor="middle" font-size="11.5" fill="#1a1a1a">0.2</text>
<line x1="2017.5" y1="693" x2="2017.5" y2="702" stroke="#000" stroke-width="1"/>
<text x="2018.5" y="717.5" text-anchor="middle" font-size="11.5" fill="#1a1a1a">0.3</text>
<text x="1938" y="737" text-anchor="middle" font-size="11.5" fill="#1a1a1a">DOS</text>
<text x="2033" y="87" text-anchor="end" font-size="11.5" fill="#1a1a1a">DOS</text>
<rect x="1984.5" y="99.5" width="63" height="61" fill="#fff" stroke="#000" stroke-width="1.5"/>
<rect x="1990" y="103" width="16" height="5" fill="#1d5b9a"/>
<text x="2010" y="110.0" font-size="11.8" fill="#1a1a1a" textLength="33.5" lengthAdjust="spacingAndGlyphs">total s</text>
<rect x="1990" y="119" width="16" height="5" fill="#fd6422"/>
<text x="2010" y="126.0" font-size="11.8" fill="#1a1a1a" textLength="33.5" lengthAdjust="spacingAndGlyphs">total p</text>
<rect x="1990" y="135" width="16" height="5" fill="#9b57a4"/>
<text x="2010" y="142.0" font-size="11.8" fill="#1a1a1a" textLength="33.5" lengthAdjust="spacingAndGlyphs">total d</text>
<rect x="1990" y="151" width="16" height="5" fill="#1b6b2a"/>
<text x="2010" y="158.0" font-size="11.8" fill="#1a1a1a" textLength="31.5" lengthAdjust="spacingAndGlyphs">total f</text>
<rect x="2048" y="96" width="5" height="70" fill="#ededed"/>
</svg><svg class="abs" style="left:0;top:1px;" width="2079" height="809" viewBox="0 0 2079 809">
<defs><radialGradient id="bzg" cx="951" cy="407" r="140" gradientUnits="userSpaceOnUse"><stop offset="0" stop-color="#76001a"/><stop offset="1" stop-color="#6c0016"/></radialGradient></defs>
<polygon points="951.3,276.1 1012.6,285.2 1073.9,347.7 1083.5,407.6 1073.9,468.4 1012.6,531.6 951.3,540.4 890.0,531.6 828.7,468.4 818.4,407.6 828.7,347.7 890.0,285.2" fill="url(#bzg)" stroke="#b8000e" stroke-width="2.7" stroke-linejoin="round"/>
<polyline points="890.0,285.2 951.3,294.1 1012.6,285.2" fill="none" stroke="#b8000e" stroke-width="2.5" stroke-linejoin="round"/>
<polyline points="890.0,531.6 951.3,522.8 1012.6,531.6" fill="none" stroke="#b8000e" stroke-width="2.5" stroke-linejoin="round"/>
<polyline points="828.7,347.7 836.5,407.6 828.7,468.4" fill="none" stroke="#b8000e" stroke-width="2.5" stroke-linejoin="round"/>
<polyline points="1073.9,347.7 1066.2,407.6 1073.9,468.4" fill="none" stroke="#b8000e" stroke-width="2.5" stroke-linejoin="round"/>
<polyline points="951.3,336.2 1022.2,407.6 951.3,479.9 880.5,407.6 951.3,336.2" fill="none" stroke="#b6000e" stroke-width="2.6" stroke-linejoin="round"/>
<polyline points="951.3,355.4 1003.1,407.6 951.3,460.7 897.7,407.6 951.3,355.4" fill="none" stroke="#b6000e" stroke-width="2.6" stroke-linejoin="round"/>
<polyline points="818.4,407.6 897.7,407.6" fill="none" stroke="#c0000e" stroke-width="2.6" stroke-linejoin="round"/>
<polyline points="1003.1,407.6 1083.5,407.6" fill="none" stroke="#c0000e" stroke-width="2.6" stroke-linejoin="round"/>
<polyline points="951.3,276.1 951.3,355.4" fill="none" stroke="#c0000e" stroke-width="2.6" stroke-linejoin="round"/>
<polyline points="951.3,460.7 951.3,540.4" fill="none" stroke="#c0000e" stroke-width="2.6" stroke-linejoin="round"/>
<line x1="807.7" y1="265.3" x2="951.3" y2="407.6" stroke="#cc4e5e" stroke-width="1.5"/>
<line x1="951.3" y1="407.6" x2="1093.1" y2="550.8" stroke="#6aa84a" stroke-width="1.2"/>
<line x1="951.3" y1="407.6" x2="950.8" y2="284.5" stroke="#d0600c" stroke-width="1.6"/>
<line x1="950.8" y1="284.5" x2="983.0" y2="280.5" stroke="#8f7a1e" stroke-width="1.6"/>
<line x1="983.0" y1="280.5" x2="1012.7" y2="285.1" stroke="#8f7a1e" stroke-width="1.6"/>
<line x1="950.8" y1="284.5" x2="1012.7" y2="285.1" stroke="#8f7a1e" stroke-width="1.6"/>
<line x1="983.0" y1="280.5" x2="1017.0" y2="341.9" stroke="#8f7a1e" stroke-width="1.6"/>
<line x1="1012.7" y1="285.1" x2="1017.0" y2="341.9" stroke="#8f7a1e" stroke-width="1.6"/>
<line x1="1012.7" y1="285.1" x2="1043.7" y2="316.1" stroke="#8f7a1e" stroke-width="1.6"/>
<line x1="951.3" y1="407.6" x2="1043.7" y2="316.1" stroke="#7a5a14" stroke-width="1.6"/>
<line x1="951.8" y1="283.5" x2="959.7" y2="276.6" stroke="#c8c0c8" stroke-width="1.4"/>
<line x1="983.0" y1="280.5" x2="991.3" y2="271.6" stroke="#c8c0c8" stroke-width="1.4"/>
<line x1="1012.7" y1="285.1" x2="1022.0" y2="276.6" stroke="#c8c0c8" stroke-width="1.4"/>
<line x1="1017.0" y1="341.9" x2="1026.9" y2="333.0" stroke="#c8c0c8" stroke-width="1.4"/>
<line x1="1043.7" y1="316.1" x2="1052.6" y2="307.2" stroke="#c8c0c8" stroke-width="1.4"/>
<line x1="1052.6" y1="307.2" x2="1058.6" y2="301.3" stroke="#3030c0" stroke-width="1.4"/>
<text x="963.0" y="265.0" font-family="Liberation Sans" font-weight="bold" font-size="24" fill="#ffffff">X</text>
<text x="995.5" y="261.0" font-family="Liberation Sans" font-weight="bold" font-size="24" fill="#ffffff">U</text>
<text x="1025.5" y="265.0" font-family="Liberation Sans" font-weight="bold" font-size="24" fill="#ffffff">W</text>
<text x="1056.0" y="296.0" font-family="Liberation Sans" font-weight="bold" font-size="24" fill="#ffffff">K</text>
<text x="1031.5" y="321.8" font-family="Liberation Sans" font-weight="bold" font-size="24" fill="#ffffff">L</text>
<text x="965.5" y="388.3" font-family="Liberation Sans" font-weight="bold" font-size="24" fill="#ffffff">Γ</text>
</svg>
</body></html>
